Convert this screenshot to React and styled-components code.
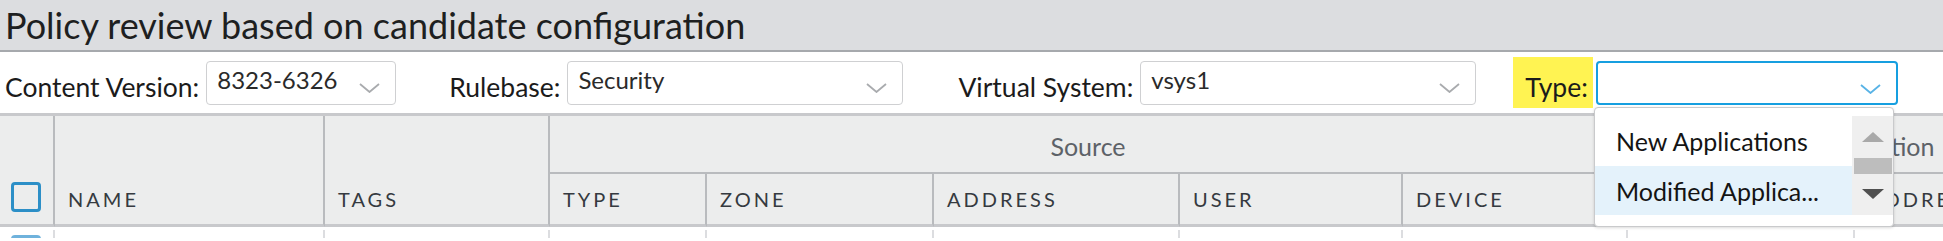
import React from "react";
import styled, { createGlobalStyle } from "styled-components";

const Global = createGlobalStyle`
  html, body { margin: 0; padding: 0; background: #fff; overflow: hidden; }
  body { font-family: Lato, "Open Sans", sans-serif; color: #1c1c1c; }
  * { box-sizing: border-box; }
`;

const Page = styled.div`
  position: relative;
  width: 1943px;
  height: 241px;
  overflow: hidden;
`;

const TitleBar = styled.div`
  height: 52px;
  background: #dcdde0;
  border-bottom: 2px solid #a6a9ad;
  display: flex;
  align-items: center;
  padding-left: 5px;
  font-size: 36px;
  color: #1e1f21;
  white-space: nowrap;
`;

const Toolbar = styled.div`
  height: 61px;
  display: flex;
  align-items: center;
  padding-left: 5px;
`;

const Field = styled.div`
  display: flex;
  align-items: center;
  margin-left: ${(p) => p.$gap || 0}px;
`;

const Label = styled.div`
  font-size: 26.5px;
  color: #1b1b1b;
  height: 51px;
  display: flex;
  align-items: center;
  padding: 9px ${(p) => (p.$highlight ? 5 : 0)}px 0 ${(p) => (p.$highlight ? 12 : 0)}px;
  margin-right: ${(p) => (p.$highlight ? 3 : 7)}px;
  background: ${(p) => (p.$highlight ? "#fff352" : "transparent")};
  white-space: nowrap;
`;

const Select = styled.div`
  width: ${(p) => p.$w}px;
  height: 44px;
  border: ${(p) => (p.$active ? "2px solid #169fe0" : "1px solid #cfd0d2")};
  border-radius: 4px;
  background: #fff;
  display: flex;
  align-items: flex-start;
  justify-content: space-between;
  padding: 3px 15px 0 ${(p) => (p.$active ? 9 : 10)}px;
  font-size: 24px;
  color: #2a2a2a;
`;

const Chevron = styled.svg`
  width: 21px;
  height: 10px;
  margin-top: 18px;
  flex: none;
`;

const ChevronIcon = ({ active }) => (
  <Chevron viewBox="0 0 21 10">
    <polyline
      points="1,1 10.5,9 20,1"
      fill="none"
      stroke={active ? "#58b3e6" : "#a9abae"}
      strokeWidth="1.8"
    />
  </Chevron>
);

const Grid = styled.div`
  display: grid;
  grid-template-columns: 55px 270px 225px 157px 227px 246px 223px 225px 227px 260px;
  grid-template-rows: 58px 53px 11px;
  border-top: 3px solid #c8c9cc;
  width: 2115px;
`;

const HeadCell = styled.div`
  background: #eceded;
  border-right: 2px solid #b9bbbe;
  border-bottom: ${(p) => (p.$group ? "2px solid #b9bbbe" : "3px solid #c8c9cc")};
  grid-column: ${(p) => p.$col};
  grid-row: ${(p) => p.$row};
  display: flex;
  align-items: ${(p) => (p.$group ? "center" : "flex-end")};
  justify-content: ${(p) => (p.$group ? "center" : "flex-start")};
`;

const GroupTitle = styled.span`
  font-size: 25px;
  color: #5d6268;
  padding-top: 4px;
`;

const ColTitle = styled.span`
  font-size: 20px;
  letter-spacing: 3px;
  color: #353a40;
  height: 50px;
  display: flex;
  align-items: center;
  padding-left: 13px;
`;

const CheckBox = styled.div`
  width: 30px;
  height: 30px;
  border: 3px solid #2c8fc7;
  border-radius: 4px;
  margin: 0 0 12px 11px;
  flex: none;
`;

const DataCell = styled.div`
  grid-row: 3;
  border-right: 2px solid #dcdde0;
  margin-top: 3px;
  overflow: hidden;
`;

const RowCheck = styled.div`
  width: 30px;
  height: 30px;
  border: 3px solid #6fb2dc;
  border-radius: 4px;
  margin: 5px 0 0 11px;
`;

const Menu = styled.div`
  position: absolute;
  left: 1594px;
  top: 107px;
  width: 300px;
  height: 120px;
  background: #fff;
  border: 1px solid #c9cacc;
  border-radius: 4px;
  box-shadow: 0 1px 3px rgba(0, 0, 0, 0.15);
  padding: 8px 0 0 0;
  display: flex;
`;

const MenuList = styled.div`
  flex: 1;
`;

const MenuItem = styled.div`
  height: ${(p) => p.$h}px;
  display: flex;
  align-items: center;
  padding-left: 21px;
  font-size: 25px;
  color: #141414;
  background: ${(p) => (p.$selected ? "#e4f2fb" : "#fff")};
  white-space: nowrap;
`;

const ScrollBar = styled.div`
  width: 41px;
  height: 99px;
  background: #efefef;
  display: flex;
  flex-direction: column;
  align-items: center;
  padding: 2px 1px 0;
`;

const Arrow = styled.div`
  width: 0;
  height: 0;
  border-left: 11px solid transparent;
  border-right: 11px solid transparent;
  ${(p) =>
    p.$up
      ? "border-bottom: 10px solid #a9a9a9; margin-top: 14px;"
      : "border-top: 10px solid #505050; margin-top: 15px;"}
`;

const Thumb = styled.div`
  width: 38px;
  height: 16px;
  background: #bdbdbd;
  margin-top: 16px;
`;

const subCols = ["TYPE", "ZONE", "ADDRESS", "USER", "DEVICE"];

export default function App() {
  return (
    <Page>
      <Global />
      <TitleBar>Policy review based on candidate configuration</TitleBar>
      <Toolbar>
        <Field>
          <Label>Content Version:</Label>
          <Select $w={190}>
            <span>8323-6326</span>
            <ChevronIcon />
          </Select>
        </Field>
        <Field $gap={53}>
          <Label>Rulebase:</Label>
          <Select $w={336}>
            <span>Security</span>
            <ChevronIcon />
          </Select>
        </Field>
        <Field $gap={55}>
          <Label>Virtual System:</Label>
          <Select $w={336}>
            <span>vsys1</span>
            <ChevronIcon />
          </Select>
        </Field>
        <Field $gap={37}>
          <Label $highlight>Type:</Label>
          <Select $w={302} $active>
            <span />
            <ChevronIcon active />
          </Select>
        </Field>
      </Toolbar>
      <Grid>
        <HeadCell $col="1" $row="1 / 3">
          <CheckBox />
        </HeadCell>
        <HeadCell $col="2" $row="1 / 3">
          <ColTitle>NAME</ColTitle>
        </HeadCell>
        <HeadCell $col="3" $row="1 / 3">
          <ColTitle>TAGS</ColTitle>
        </HeadCell>
        <HeadCell $group $col="4 / 9" $row="1">
          <GroupTitle>Source</GroupTitle>
        </HeadCell>
        <HeadCell $group $col="9 / 11" $row="1">
          <GroupTitle>Destination</GroupTitle>
        </HeadCell>
        {subCols.map((c, i) => (
          <HeadCell key={c} $col={`${4 + i}`} $row="2">
            <ColTitle>{c}</ColTitle>
          </HeadCell>
        ))}
        <HeadCell $col="9" $row="2">
          <ColTitle>ZONE</ColTitle>
        </HeadCell>
        <HeadCell $col="10" $row="2">
          <ColTitle>ADDRESS</ColTitle>
        </HeadCell>
        {Array.from({ length: 10 }).map((_, i) => (
          <DataCell key={i}>{i === 0 ? <RowCheck /> : null}</DataCell>
        ))}
      </Grid>
      <Menu>
        <MenuList>
          <MenuItem $h={50}>New Applications</MenuItem>
          <MenuItem $h={49} $selected>
            Modified Applica...
          </MenuItem>
        </MenuList>
        <ScrollBar>
          <Arrow $up />
          <Thumb />
          <Arrow />
        </ScrollBar>
      </Menu>
    </Page>
  );
}
